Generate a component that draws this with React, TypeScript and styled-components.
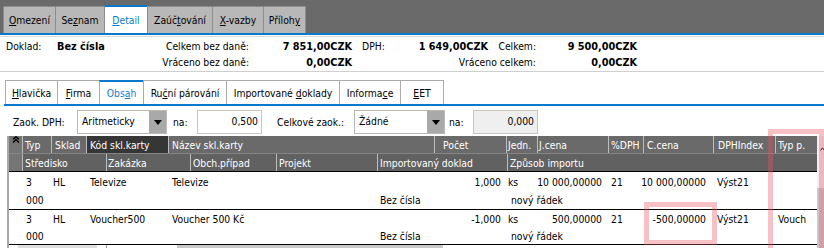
import styled, { createGlobalStyle } from 'styled-components';

const GlobalStyle = createGlobalStyle`
  * { box-sizing: border-box; }
  html, body { margin: 0; padding: 0; background: #fff; }
  body {
    font-family: "DejaVu Sans Condensed", "DejaVu Sans", "Liberation Sans", sans-serif;
    font-size: 10.3px;
    color: #000;
  }
`;

const Page = styled.div`
  position: relative;
  width: 824px;
  height: 248px;
  overflow: hidden;
`;

/* ---------- top tabs ---------- */

const TopBar = styled.div`
  height: 35px;
  display: flex;
  align-items: flex-end;
  padding-left: 3px;
  background: #6a6a6a;
  border-bottom: 2px solid #0a78cc;
`;

const TopTab = styled.div<{ $w: number; $active?: boolean }>`
  width: ${p => p.$w}px;
  height: ${p => (p.$active ? 28 : 27)}px;
  margin-left: -1px;
  display: flex;
  align-items: center;
  justify-content: center;
  background: ${p => (p.$active ? '#fff' : '#b8b8b8')};
  color: ${p => (p.$active ? '#0a78cc' : '#000')};
  border: 1px solid #8c8c8c;
  border-top: ${p => (p.$active ? '2px solid #0a78cc' : '1px solid #8c8c8c')};
  border-bottom: none;
  white-space: nowrap;
  &:first-child { margin-left: 0; }
`;

const Rule = styled.div`
  height: 2px;
  border-top: 1px solid #fff;
  border-bottom: 1px solid #d9d9d9;
`;

/* ---------- summary ---------- */

const Summary = styled.div`
  padding: 1px 0 0 6px;
`;

const SumRow = styled.div`
  display: flex;
  height: 16px;
  align-items: center;
`;

const SumCell = styled.div<{ $w: number; $right?: boolean; $bold?: boolean; $pad?: number }>`
  width: ${p => p.$w}px;
  flex: none;
  text-align: ${p => (p.$right ? 'right' : 'left')};
  font-weight: ${p => (p.$bold ? 'bold' : 'normal')};
  font-size: ${p => (p.$bold ? '10.8px' : 'inherit')};
  padding-left: ${p => p.$pad ?? 0}px;
  white-space: nowrap;
`;

const SectionLine = styled.div`
  margin-top: 1px;
  height: 1px;
  background: #cfcfcf;
`;

/* ---------- sub tabs ---------- */

const SubTabs = styled.div`
  margin: 8px 0 0 4px;
  padding-left: 1px;
  height: 26px;
  display: flex;
  border-bottom: 2px solid #0a78cc;
`;

const SubTab = styled.div<{ $w: number; $active?: boolean }>`
  width: ${p => p.$w}px;
  height: 24px;
  margin-left: -1px;
  display: flex;
  align-items: center;
  justify-content: center;
  background: #fff;
  color: ${p => (p.$active ? '#1a7cc9' : '#000')};
  border: 1px solid #ababab;
  border-top: ${p => (p.$active ? '2px solid #0a78cc' : '1px solid #ababab')};
  border-bottom: none;
  white-space: nowrap;
  &:first-child { margin-left: 0; }
`;

const Key = styled.span`
  text-decoration: underline;
`;

/* ---------- toolbar ---------- */

const Toolbar = styled.div`
  height: 30px;
  display: flex;
  align-items: flex-start;
  padding: 4px 0 0 13px;
`;

const Label = styled.div<{ $w: number; $pad?: number }>`
  width: ${p => p.$w}px;
  flex: none;
  height: 24px;
  line-height: 24px;
  padding-left: ${p => p.$pad ?? 0}px;
  white-space: nowrap;
`;

const Combo = styled.div<{ $w: number }>`
  width: ${p => p.$w}px;
  height: 24px;
  flex: none;
  display: flex;
  border: 1px solid #b9b9b9;
  background: #fff;
`;

const ComboText = styled.div`
  flex: 1;
  line-height: 20px;
  padding-left: 4px;
`;

const ComboButton = styled.div`
  width: 17px;
  background: #a9a9a9;
  display: flex;
  align-items: center;
  justify-content: center;
`;

const NumInput = styled.div<{ $w: number; $disabled?: boolean }>`
  width: ${p => p.$w}px;
  height: 24px;
  flex: none;
  border: 1px solid #c6c6c6;
  background: ${p => (p.$disabled ? '#efefef' : '#fff')};
  text-align: right;
  line-height: 20px;
  padding-right: 3px;
`;

/* ---------- table ---------- */

const TableArea = styled.div`
  display: flex;
  height: 112px;
`;

const Grid = styled.div`
  margin-left: 7px;
  width: 810px;
  border-left: 2px solid #a8a8a8;
`;

const HeadRow = styled.div<{ $bg: string; $last?: boolean }>`
  display: flex;
  height: 18px;
  background: ${p => p.$bg};
  color: #fff;
  border-bottom: 1px solid ${p => (p.$last ? '#000' : '#858585')};
`;

const Collapse = styled.div<{ $bg: string }>`
  width: 13px;
  flex: none;
  background: ${p => p.$bg};
  display: flex;
  justify-content: center;
  align-items: flex-start;
`;

const HCell = styled.div<{ $w: number; $pad: number; $dark?: boolean }>`
  width: ${p => p.$w}px;
  flex: none;
  display: flex;
  align-items: center;
  padding-left: ${p => p.$pad}px;
  border-left: 1px solid #bdbdbd;
  background: ${p => (p.$dark ? '#363636' : 'transparent')};
  white-space: nowrap;
  overflow: hidden;
`;

const Group = styled.div<{ $top?: number }>`
  padding-top: ${p => p.$top ?? 0}px;
  border-bottom: 1px solid #000;
`;

const DataRow = styled.div<{ $h: number }>`
  display: flex;
  height: ${p => p.$h}px;
  padding-left: 13px;
`;

const DCell = styled.div<{ $w: number; $pad: number; $right?: boolean }>`
  width: ${p => p.$w}px;
  flex: none;
  display: flex;
  align-items: center;
  justify-content: ${p => (p.$right ? 'flex-end' : 'flex-start')};
  padding-left: ${p => (p.$right ? 0 : p.$pad)}px;
  padding-right: ${p => (p.$right ? p.$pad : 0)}px;
  white-space: nowrap;
`;

const VScroll = styled.div`
  width: 7px;
  flex: none;
  display: flex;
  flex-direction: column;
  background: #f0f0f0;
`;

const ScrollArrow = styled.div`
  height: 52px;
  padding: 5px 0 0 3px;
`;

const ScrollThumb = styled.div`
  flex: 1;
  background: #c8c8c8;
`;

const HScroll = styled.div`
  display: flex;
  height: 4px;
  margin-left: 9px;
`;

const Seg = styled.div<{ $w: number; $bg: string }>`
  width: ${p => p.$w}px;
  flex: none;
  background: ${p => p.$bg};
`;

const Mark = styled.div<{ $x: number; $y: number; $w: number; $h: number }>`
  position: absolute;
  left: ${p => p.$x}px;
  top: ${p => p.$y}px;
  width: ${p => p.$w}px;
  height: ${p => p.$h}px;
  border: 5px solid rgba(232, 84, 98, 0.36);
  pointer-events: none;
`;

/* ---------- data ---------- */

type Col = { w: number; hp: number; dp: number; right?: boolean };

const cols1: Col[] = [
  { w: 29, hp: 2, dp: 4 },
  { w: 35, hp: 3, dp: 2 },
  { w: 82, hp: 3, dp: 4 },
  { w: 266, hp: 3, dp: 4 },
  { w: 72, hp: 8, dp: 5, right: true },
  { w: 31, hp: 1, dp: 2 },
  { w: 71, hp: 1, dp: 6, right: true },
  { w: 35, hp: 2, dp: 3 },
  { w: 70, hp: 3, dp: 7, right: true },
  { w: 62, hp: 4, dp: 4 },
  { w: 42, hp: 2, dp: 3 },
];

const cols2: Col[] = [
  { w: 84, hp: 2, dp: 4 },
  { w: 84, hp: 1, dp: 3 },
  { w: 86, hp: 2, dp: 3 },
  { w: 101, hp: 2, dp: 3 },
  { w: 130, hp: 2, dp: 3 },
  { w: 310, hp: 2, dp: 4 },
];

const head1 = ['Typ', 'Sklad', 'Kód skl.karty', 'Název skl.karty', 'Počet', 'Jedn.', 'J.cena', '%DPH', 'C.cena', 'DPHIndex', 'Typ p.'];
const head2 = ['Středisko', 'Zakázka', 'Obch.případ', 'Projekt', 'Importovaný doklad', 'Způsob importu'];

const items = [
  {
    main: ['3', 'HL', 'Televize', 'Televize', '1,000', 'ks', '10 000,00000', '21', '10 000,00000', 'Výst21', ''],
    sub: ['000', '', '', '', 'Bez čísla', 'nový řádek'],
    top: 1,
    h: [18, 18],
  },
  {
    main: ['3', 'HL', 'Voucher500', 'Voucher 500 Kč', '-1,000', 'ks', '500,00000', '21', '-500,00000', 'Výst21', 'Vouch'],
    sub: ['000', '', '', '', 'Bez čísla', 'nový řádek'],
    top: 0,
    h: [17, 17],
  },
];

function Mn({ text, at }: { text: string; at: number }) {
  return (
    <span>
      {text.slice(0, at)}
      <Key>{text.charAt(at)}</Key>
      {text.slice(at + 1)}
    </span>
  );
}

const topTabs = [
  { t: 'Omezení', k: 0, w: 53 },
  { t: 'Seznam', k: 2, w: 50 },
  { t: 'Detail', k: 0, w: 44, active: true },
  { t: 'Zaúčtování', k: 4, w: 66 },
  { t: 'X-vazby', k: 0, w: 52 },
  { t: 'Přílohy', k: 6, w: 43 },
];

const subTabs = [
  { t: 'Hlavička', k: 0, w: 53 },
  { t: 'Firma', k: 0, w: 43 },
  { t: 'Obsah', k: 3, w: 45, active: true },
  { t: 'Ruční párování', k: 2, w: 84 },
  { t: 'Importované doklady', k: 12, w: 114 },
  { t: 'Informace', k: 7, w: 62 },
  { t: 'EET', k: 0, w: 44 },
];

function DropArrow() {
  return (
    <svg width="8" height="5" viewBox="0 0 8 5">
      <path d="M0 0 L8 0 L4 5 Z" fill="#000" />
    </svg>
  );
}

export default function App() {
  return (
    <Page>
      <GlobalStyle />
      <TopBar>
        {topTabs.map(t => (
          <TopTab key={t.t} $w={t.w} $active={t.active}>
            <Mn text={t.t} at={t.k} />
          </TopTab>
        ))}
      </TopBar>
      <Rule />

      <Summary>
        <SumRow>
          <SumCell $w={51}>Doklad:</SumCell>
          <SumCell $w={103} $bold>Bez čísla</SumCell>
          <SumCell $w={89} $right>Celkem bez daně:</SumCell>
          <SumCell $w={103} $right $bold>7 851,00CZK</SumCell>
          <SumCell $w={40} $pad={10}>DPH:</SumCell>
          <SumCell $w={96} $right $bold>1 649,00CZK</SumCell>
          <SumCell $w={48} $right>Celkem:</SumCell>
          <SumCell $w={101} $right $bold>9 500,00CZK</SumCell>
        </SumRow>
        <SumRow>
          <SumCell $w={51} />
          <SumCell $w={103} />
          <SumCell $w={89} $right>Vráceno bez daně:</SumCell>
          <SumCell $w={103} $right $bold>0,00CZK</SumCell>
          <SumCell $w={184} $right>Vráceno celkem:</SumCell>
          <SumCell $w={101} $right $bold>0,00CZK</SumCell>
        </SumRow>
      </Summary>
      <SectionLine />

      <SubTabs>
        {subTabs.map(t => (
          <SubTab key={t.t} $w={t.w} $active={t.active}>
            <Mn text={t.t} at={t.k} />
          </SubTab>
        ))}
      </SubTabs>

      <Toolbar>
        <Label $w={64}>Zaok. DPH:</Label>
        <Combo $w={90}>
          <ComboText>Aritmeticky</ComboText>
          <ComboButton><DropArrow /></ComboButton>
        </Combo>
        <Label $w={30} $pad={6}>na:</Label>
        <NumInput $w={65}>0,500</NumInput>
        <Label $w={92} $pad={15}>Celkové zaok.:</Label>
        <Combo $w={91}>
          <ComboText>Žádné</ComboText>
          <ComboButton><DropArrow /></ComboButton>
        </Combo>
        <Label $w={28} $pad={4}>na:</Label>
        <NumInput $w={65} $disabled>0,000</NumInput>
      </Toolbar>

      <TableArea>
        <Grid>
          <HeadRow $bg="#6a6a6a">
            <Collapse $bg="#757575">
              <svg width="8" height="7" viewBox="0 0 8 7">
                <path d="M1 3.5 L4 0.8 L7 3.5 M1 6.5 L4 3.8 L7 6.5" stroke="#000" strokeWidth="1.4" fill="none" />
              </svg>
            </Collapse>
            {cols1.map((c, i) => (
              <HCell key={i} $w={c.w} $pad={c.hp} $dark={i === 2}>{head1[i]}</HCell>
            ))}
          </HeadRow>
          <HeadRow $bg="#616161" $last>
            <Collapse $bg="#757575" />
            {cols2.map((c, i) => (
              <HCell key={i} $w={c.w} $pad={c.hp}>{head2[i]}</HCell>
            ))}
          </HeadRow>

          {items.map((it, n) => (
            <Group key={n} $top={it.top}>
              <DataRow $h={it.h[0]}>
                {cols1.map((c, i) => (
                  <DCell key={i} $w={c.w} $pad={c.dp} $right={c.right}>{it.main[i]}</DCell>
                ))}
              </DataRow>
              <DataRow $h={it.h[1]}>
                {cols2.map((c, i) => (
                  <DCell key={i} $w={c.w} $pad={c.dp}>{it.sub[i]}</DCell>
                ))}
              </DataRow>
            </Group>
          ))}
          <HScroll>
            <Seg $w={79} $bg="#dedede" />
            <Seg $w={9} $bg="#fff" />
            <Seg $w={1} $bg="#9a9a9a" />
            <Seg $w={70} $bg="#fff" />
            <Seg $w={266} $bg="#c9c9c9" />
          </HScroll>
        </Grid>
        <VScroll>
          <ScrollArrow>
            <svg width="5" height="4" viewBox="0 0 5 4">
              <path d="M0.5 3.5 L2.5 0.8 L4.5 3.5" stroke="#000" strokeWidth="1" fill="none" />
            </svg>
          </ScrollArrow>
          <ScrollThumb />
        </VScroll>
      </TableArea>

      <Mark $x={768} $y={129} $w={56} $h={125} />
      <Mark $x={644} $y={202} $w={73} $h={43} />
    </Page>
  );
}
